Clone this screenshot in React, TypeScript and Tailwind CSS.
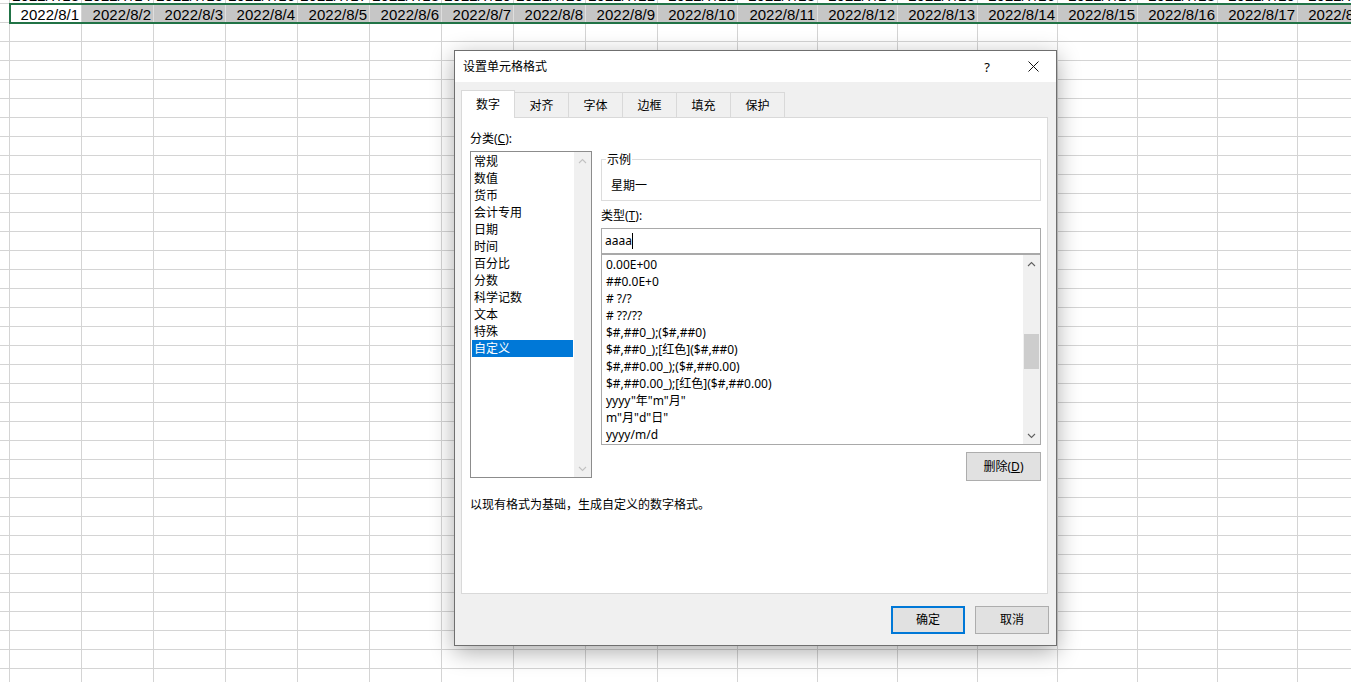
import React from "react";

const COLS = [
  "w-[10px]",
  "w-[72px]", "w-[72px]", "w-[72px]", "w-[72px]", "w-[72px]", "w-[72px]", "w-[72px]", "w-[72px]", "w-[72px]",
  "w-[80px]", "w-[80px]", "w-[80px]", "w-[80px]", "w-[80px]", "w-[80px]", "w-[80px]", "w-[80px]", "w-[80px]",
];

const aboveTexts = COLS.map((_, i) => (i === 0 ? "" : `2022/7/${i + 12}`));
const selTexts = COLS.map((_, i) => (i === 0 ? "" : `2022/8/${i}`));

function Row({ texts }: { texts?: string[] }) {
  return (
    <div className="flex h-[19px] shrink-0">
      {COLS.map((w, i) => (
        <div
          key={i}
          className={`${w} h-full shrink-0 border-r border-b border-[#d4d4d4] flex items-end justify-end pr-[2px] overflow-hidden whitespace-nowrap text-[15px] leading-[14px]`}
        >
          {texts ? texts[i] : ""}
        </div>
      ))}
    </div>
  );
}

function SelectedRow() {
  return (
    <div className="flex h-[19px] shrink-0">
      <div className="w-[10px] h-full shrink-0 border-r border-b border-[#d4d4d4]" />
      <div className="relative z-10 flex h-full outline-2 outline-solid outline-[#217346] -outline-offset-1">
        {COLS.slice(1).map((w, i) => (
          <div
            key={i}
            className={`${w} h-full shrink-0 border-r border-b flex items-end justify-end pr-[2px] overflow-hidden whitespace-nowrap text-[15px] leading-[14px] ${
              i === 0 ? "bg-white border-[#d4d4d4]" : "bg-[#c6c6c6] border-[#dedede]"
            }`}
          >
            {selTexts[i + 1]}
          </div>
        ))}
      </div>
    </div>
  );
}

function Chevron({ up, color }: { up?: boolean; color: string }) {
  return (
    <svg width="9" height="6" viewBox="0 0 9 6">
      <polyline
        points={up ? "1,5 4.5,1.5 8,5" : "1,1 4.5,4.5 8,1"}
        fill="none"
        stroke={color}
        strokeWidth="1.1"
      />
    </svg>
  );
}

function VScroll({ disabled, thumb }: { disabled?: boolean; thumb?: boolean }) {
  const c = disabled ? "#c2c2c2" : "#606060";
  return (
    <div className="w-[17px] bg-[#f0f0f0] flex flex-col shrink-0">
      <div className="h-[17px] flex items-center justify-center">
        <Chevron up color={c} />
      </div>
      <div className="flex-1">
        {thumb && <div className="mt-[62px] mx-[1px] h-[35px] bg-[#cdcdcd]" />}
      </div>
      <div className="h-[17px] flex items-center justify-center">
        <Chevron color={c} />
      </div>
    </div>
  );
}

const categories = ["常规", "数值", "货币", "会计专用", "日期", "时间", "百分比", "分数", "科学记数", "文本", "特殊", "自定义"];

const formats = [
  "0.00E+00",
  "##0.0E+0",
  "# ?/?",
  "# ??/??",
  "$#,##0_);($#,##0)",
  "$#,##0_);[红色]($#,##0)",
  "$#,##0.00_);($#,##0.00)",
  "$#,##0.00_);[红色]($#,##0.00)",
  'yyyy"年"m"月"',
  'm"月"d"日"',
  "yyyy/m/d",
];

function Dialog() {
  return (
    <div className="absolute left-[454px] top-[50px] w-[603px] h-[596px] border border-[#6f6f6f] bg-[#f0f0f0] shadow-[0_6px_22px_rgba(0,0,0,0.33)] flex flex-col font-['Noto_Sans','Noto_Sans_CJK_SC',sans-serif] text-[12px] leading-[16px] text-black">
      {/* title bar */}
      <div className="h-[31px] shrink-0 bg-white flex items-center">
        <div className="flex-1 pl-[8px]">设置单元格格式</div>
        <div className="w-[46px] h-full flex items-center justify-center text-[13px]">?</div>
        <div className="w-[46px] h-full flex items-center justify-center">
          <svg width="11" height="11" viewBox="0 0 11 11">
            <line x1="0.5" y1="0.5" x2="10.5" y2="10.5" stroke="#111" strokeWidth="1" />
            <line x1="10.5" y1="0.5" x2="0.5" y2="10.5" stroke="#111" strokeWidth="1" />
          </svg>
        </div>
      </div>

      <div className="flex flex-col px-[6px] pt-[8px]">
        {/* tabs */}
        <div className="flex items-end h-[28px]">
          <div className="relative z-10 w-[54px] h-[28px] bg-white border-l border-t border-r border-[#d9d9d9] flex items-center justify-center">
            数字
          </div>
          {["对齐", "字体", "边框", "填充", "保护"].map((t) => (
            <div
              key={t}
              className="w-[54px] h-[26px] bg-[#f0f0f0] border-t border-r border-[#d9d9d9] flex items-center justify-center"
            >
              {t}
            </div>
          ))}
        </div>

        {/* panel */}
        <div className="-mt-[1px] w-[587px] h-[477px] bg-white border border-[#d9d9d9] flex flex-col">
          <div className="flex pt-[12px] pl-[8px]">
            <div className="w-[122px] flex flex-col shrink-0">
              <div className="h-[18px] leading-[18px]">
                分类(<span className="underline underline-offset-1">C</span>):
              </div>
              <div className="mt-[3px] h-[327px] border border-[#8c8c8c] flex">
                <div className="flex-1 p-[1px]">
                  {categories.map((c) => (
                    <div
                      key={c}
                      className={`h-[17px] leading-[17px] pl-[2px] whitespace-nowrap ${
                        c === "自定义" ? "bg-[#0078d7] text-white" : ""
                      }`}
                    >
                      {c}
                    </div>
                  ))}
                </div>
                <VScroll disabled />
              </div>
            </div>

            <div className="ml-[9px] w-[440px] flex flex-col shrink-0">
              <div className="relative mt-[29px] h-[42px] border border-[#dcdcdc] pl-[9px] pt-[18px]">
                <span className="absolute left-[4px] -top-[8px] bg-white px-[1px] leading-[16px]">示例</span>
                星期一
              </div>
              <div className="mt-[7px]">
                类型(<span className="underline underline-offset-1">T</span>):
              </div>
              <div className="mt-[4px] h-[26px] border border-[#a9a9a9] flex items-center pl-[3px]">
                aaaa
                <span className="inline-block w-px h-[16px] bg-black" />
              </div>
              <div className="h-[191px] border border-[#a9a9a9] flex">
                <div className="flex-1 pt-[1px] pl-[4px]">
                  {formats.map((f) => (
                    <div key={f} className="h-[17px] leading-[17px] whitespace-pre">
                      {f}
                    </div>
                  ))}
                </div>
                <VScroll thumb />
              </div>
              <button className="self-end mt-[7px] w-[75px] h-[29px] bg-[#e1e1e1] border border-[#adadad] flex items-center justify-center">
                删除(<span className="underline underline-offset-1">D</span>)
              </button>
            </div>
          </div>
          <div className="pl-[8px] mt-[16px]">以现有格式为基础，生成自定义的数字格式。</div>
        </div>

        {/* buttons */}
        <div className="flex justify-end gap-[10px] mt-[12px] mr-[1px]">
          <button className="w-[74px] h-[28px] bg-[#e1e1e1] border-2 border-[#0078d7] flex items-center justify-center">
            确定
          </button>
          <button className="w-[74px] h-[28px] bg-[#e1e1e1] border border-[#adadad] flex items-center justify-center">
            取消
          </button>
        </div>
      </div>
    </div>
  );
}

export default function App() {
  return (
    <div className="relative w-[1351px] h-[682px] overflow-hidden bg-white font-['Liberation_Sans',sans-serif] text-black">
      <div className="flex flex-col -mt-[15px]">
        <Row texts={aboveTexts} />
        <SelectedRow />
        {Array.from({ length: 36 }).map((_, i) => (
          <Row key={i} />
        ))}
      </div>
      <Dialog />
    </div>
  );
}
